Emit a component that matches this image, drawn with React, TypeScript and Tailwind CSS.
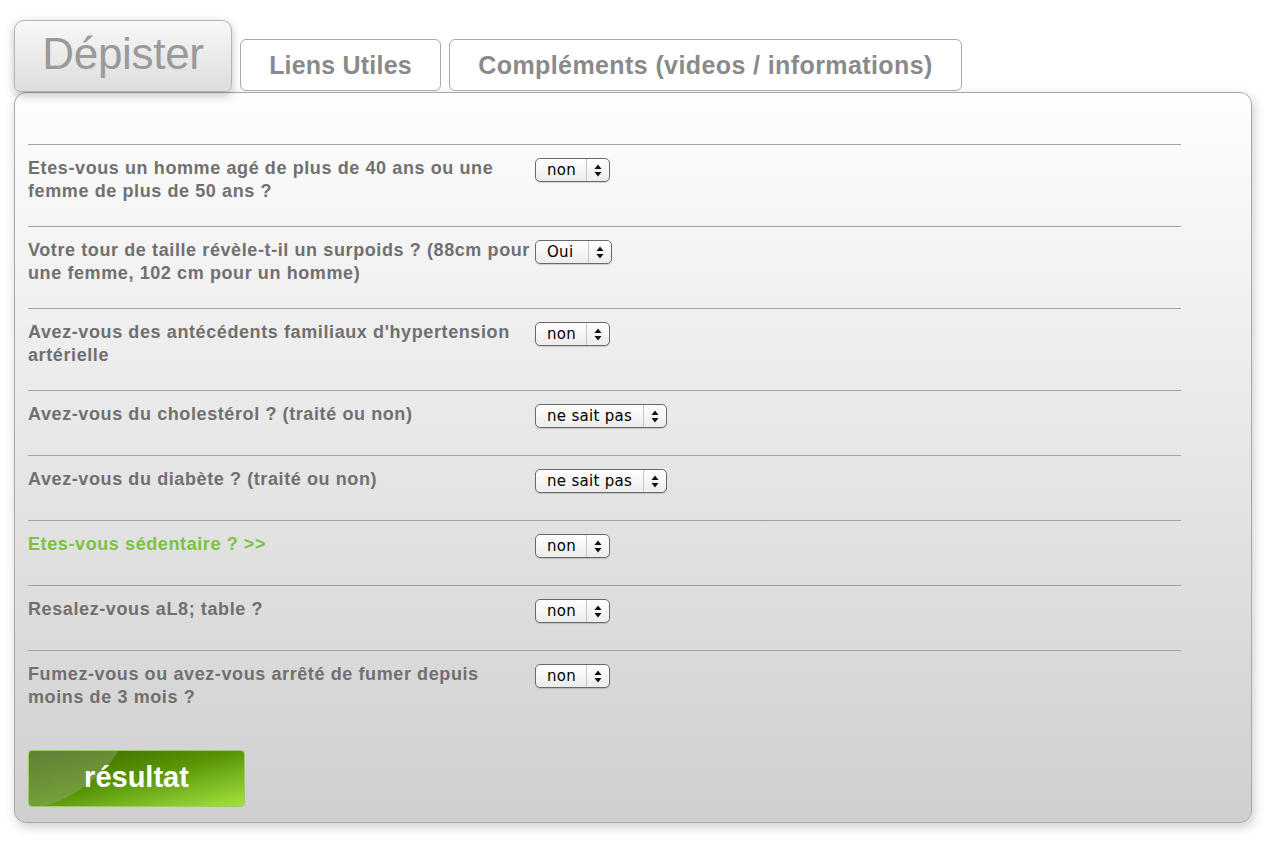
import React from "react";

const questions = [
  { text: "Etes-vous un homme agé de plus de 40 ans ou une femme de plus de 50 ans ?", value: "non", w: "w-[75px]", h: "h-[82px]" },
  { text: "Votre tour de taille révèle-t-il un surpoids ? (88cm pour une femme, 102 cm pour un homme)", value: "Oui", w: "w-[77px]", h: "h-[82px]" },
  { text: "Avez-vous des antécédents familiaux d'hypertension artérielle", value: "non", w: "w-[75px]", h: "h-[82px]" },
  { text: "Avez-vous du cholestérol ? (traité ou non)", value: "ne sait pas", w: "w-[132px]", h: "h-[65px]" },
  { text: "Avez-vous du diabète ? (traité ou non)", value: "ne sait pas", w: "w-[132px]", h: "h-[65px]" },
  { text: "Etes-vous sédentaire ? >>", value: "non", w: "w-[75px]", h: "h-[65px]", green: true },
  { text: "Resalez-vous aL8; table ?", value: "non", w: "w-[75px]", h: "h-[65px]" },
  { text: "Fumez-vous ou avez-vous arrêté de fumer depuis moins de 3 mois ?", value: "non", w: "w-[75px]", h: "h-[82px]" },
];

function FakeSelect({ value, w }: { value: string; w: string }) {
  return (
    <div className={`${w} h-[24px] flex items-stretch rounded-[5px] border border-[#6a6a6a] bg-gradient-to-b from-white to-[#ececec] shadow-[0_1px_1px_rgba(0,0,0,0.15)] font-['DejaVu_Sans',sans-serif] text-[15px] tracking-[0.3px] text-black`}>
      <span className="flex-1 flex items-center pl-[11px] leading-none">{value}</span>
      <span className="w-[23px] border-l border-[#c8c8c8] flex items-center justify-center">
        <svg width="8" height="13" viewBox="0 0 8 13">
          <path d="M4 0.5 L7.5 5 L0.5 5 Z" fill="#111" />
          <path d="M4 12.5 L7.5 8 L0.5 8 Z" fill="#111" />
        </svg>
      </span>
    </div>
  );
}

export default function App() {
  return (
    <main className="min-h-screen bg-white pl-[14px] pt-[20px] font-['Liberation_Sans',Arial,sans-serif]">
      {/* ── TABS ── */}
      <div className="flex items-start gap-[8px] h-[72px] relative z-10">
        <div className="w-[218px] h-[72px] rounded-t-[10px] rounded-b-[6px] border border-[#b5b5b5] bg-gradient-to-b from-[#f8f8f8] to-[#dddddd] shadow-[0_3px_10px_rgba(0,0,0,0.25)] flex items-center justify-center">
          <span className="text-[44px] text-[#9a9a9a] leading-none -mt-[4px] tracking-[-0.3px]">Dépister</span>
        </div>
        <div className="mt-[19px] w-[201px] h-[52px] rounded-[6px] border border-[#a9a9a9] bg-white flex items-center justify-center">
          <span className="text-[25px] font-bold text-[#8a8a8a] leading-none tracking-[0.2px]">Liens Utiles</span>
        </div>
        <div className="mt-[19px] w-[513px] h-[52px] rounded-[6px] border border-[#a9a9a9] bg-white flex items-center justify-center">
          <span className="text-[25px] font-bold text-[#8a8a8a] leading-none tracking-[0.4px]">Compléments (videos / informations)</span>
        </div>
      </div>

      {/* ── PANEL ── */}
      <section className="w-[1238px] h-[731px] rounded-[12px] border border-[#a8a8a8] bg-gradient-to-b from-[#fefefe] to-[#cfcfcf] shadow-[2px_4px_12px_rgba(0,0,0,0.2)] pl-[13px] pt-[51px]">
        <div className="w-[1153px]">
          {questions.map((q) => (
            <div key={q.text} className={`${q.h} border-t border-[#a3a3a3] flex items-start pt-[12px]`}>
              <p className={`w-[507px] text-[18px] leading-[23px] font-bold tracking-[0.6px] ${q.green ? "text-[#7cc242]" : "text-[#707070]"}`}>{q.text}</p>
              <div className="pt-[1px]">
                <FakeSelect value={q.value} w={q.w} />
              </div>
            </div>
          ))}
        </div>

        <button className="relative overflow-hidden mt-[18px] w-[217px] h-[57px] rounded-[4px] bg-gradient-to-br from-[#3a6400] via-[#5a9605] to-[#a4e43c] border border-[#9ccc6a]">
          <span className="absolute -left-[150px] -top-[200px] w-[260px] h-[260px] rounded-full bg-[#9aaa88]/40" />
          <span className="relative text-[29px] font-bold text-white leading-none">résultat</span>
        </button>
      </section>
    </main>
  );
}
